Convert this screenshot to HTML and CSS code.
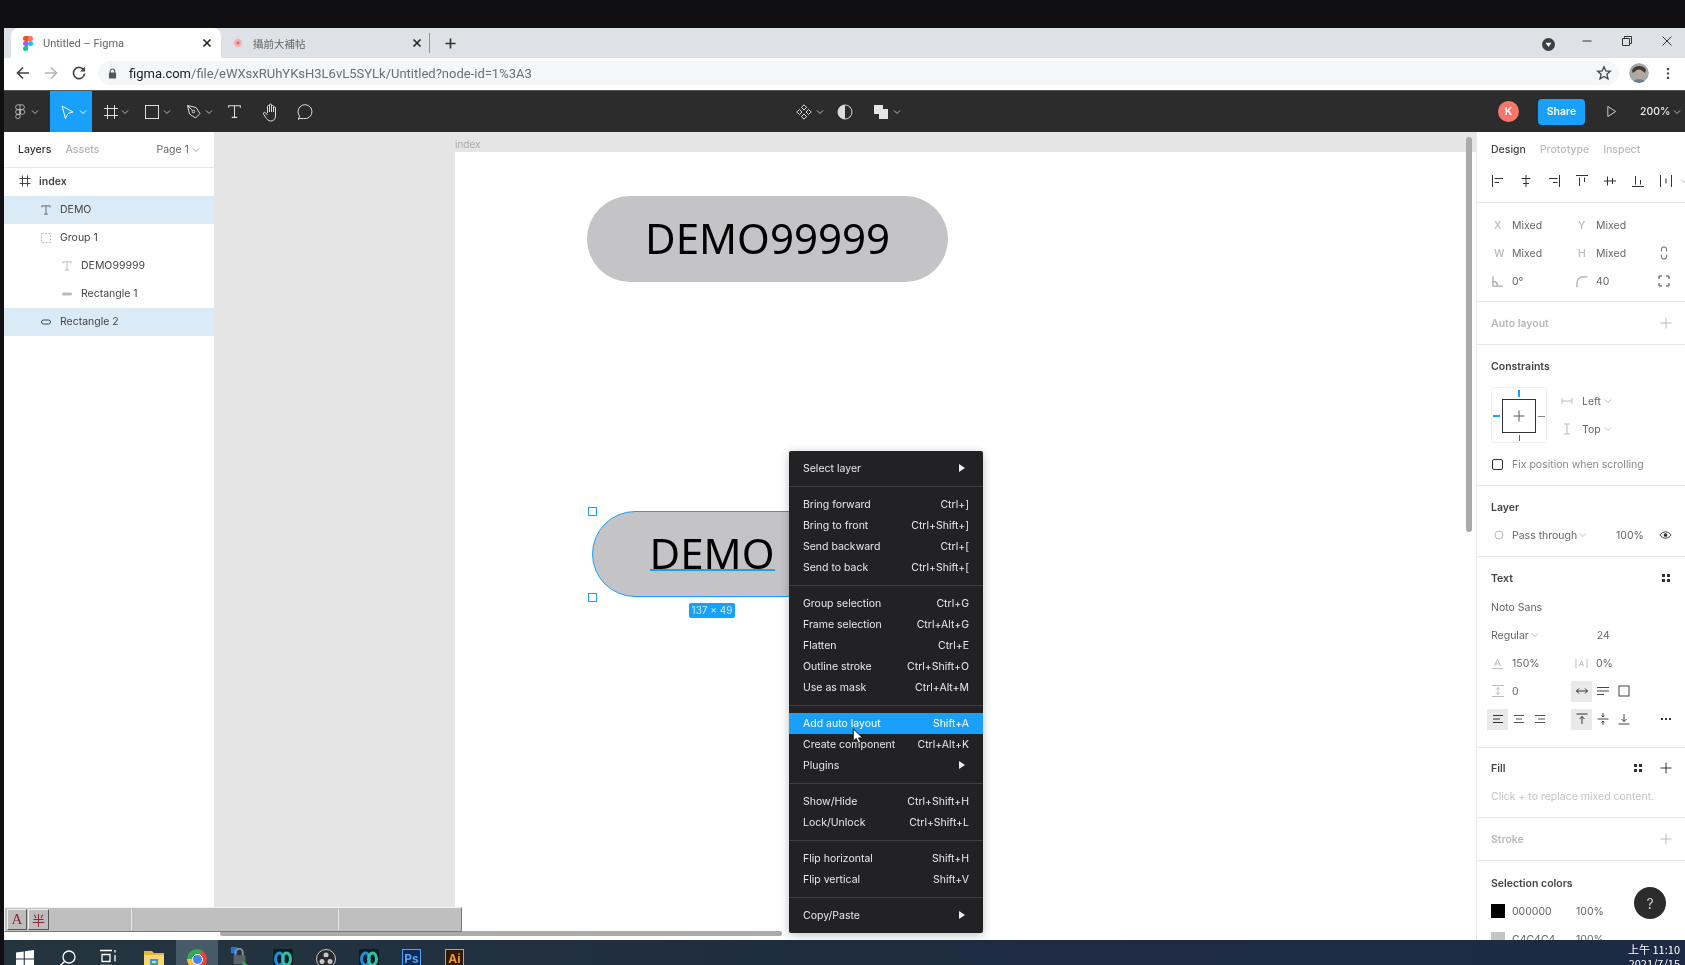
FILE: index.html
```html
<!DOCTYPE html>
<html lang="zh-Hant">
<head>
<meta charset="utf-8">
<title>Untitled – Figma</title>
<link rel="stylesheet" href="styles.css">
</head>
<body>
<svg class="sprite" aria-hidden="true">
  <symbol id="chev" viewBox="0 0 8 8"><path d="M1 2.5 4 5.5 7 2.5" fill="none" stroke="currentColor"/></symbol>
  <symbol id="tee" viewBox="0 0 16 16"><path d="M2.5 4.5V2.5H13.500V4.500M8 2.500V13.500M5.500 13.500H10.500" fill="none" stroke="currentColor"/></symbol>
  <symbol id="plus" viewBox="0 0 12 12"><path d="M6 .5V11.500M.5 6H11.500" fill="none" stroke="currentColor"/></symbol>
  <symbol id="dots" viewBox="0 0 12 12"><path d="M2 2h3v3H2zM7 2h3v3H7zM2 7h3v3H2zM7 7h3v3H7z" fill="currentColor"/></symbol>
  <symbol id="loops" viewBox="0 0 20 20"><rect width="20" height="20" rx="2" fill="#0c1c22"/><ellipse cx="6.500" cy="10" rx="4" ry="6" fill="none" stroke="#1b8fe0" stroke-width="3"/><ellipse cx="13.500" cy="10" rx="4" ry="6" fill="none" stroke="#2fc4a0" stroke-width="3"/></symbol>
</svg>

<div class="topbar"></div>

<div class="tabstrip">
  <div class="tab tab-active">
    <svg class="favicon" viewBox="0 0 12 18"><path d="M3 0H6V6H3a3 3 0 0 1 0-6Z" fill="#f24e1e"/><path d="M6 0H9a3 3 0 0 1 0 6H6Z" fill="#ff7262"/><path d="M3 6H6V12H3a3 3 0 0 1 0-6Z" fill="#a259ff"/><circle cx="9" cy="9" r="3" fill="#1abcfe"/><path d="M3 12H6V15a3 3 0 1 1-3-3Z" fill="#0acf83"/></svg>
    <span class="tab-title">Untitled – Figma</span>
    <svg class="tab-close" viewBox="0 0 10 10"><path d="M1.500 1.500 8.500 8.500M8.500 1.500 1.500 8.500" stroke="#222" stroke-width="1.600"/></svg>
  </div>
  <div class="tab">
    <svg class="favicon-round" viewBox="0 0 12 12"><circle cx="6" cy="6" r="5" fill="#f3b4b8"/><circle cx="6" cy="6" r="2" fill="#e2707a"/></svg>
    <span class="tab-title tab-title-cjk">攝前大補帖</span>
    <svg class="tab-close" viewBox="0 0 10 10"><path d="M1.500 1.500 8.500 8.500M8.500 1.500 1.500 8.500" stroke="#222" stroke-width="1.600"/></svg>
  </div>
  <span class="tab-sep"></span>
  <svg class="tab-new" viewBox="0 0 12 12"><path d="M6 .5V11.500M.5 6H11.500" stroke="#333" stroke-width="1.800"/></svg>
  <div class="win-controls">
    <svg class="win-drop" viewBox="0 0 14 14"><circle cx="7" cy="7" r="7" fill="#3c4043"/><path d="M3.800 5.200H10.200L7 9.600Z" fill="#fff"/></svg>
    <svg class="win-btn" viewBox="0 0 12 12"><path d="M1.500 6H10.500" stroke="#333"/></svg>
    <svg class="win-btn" viewBox="0 0 12 12"><path d="M1.500 3.500H8.500V10.500H1.500ZM3.500 3.500V1.500H10.500V8.500H8.500" fill="none" stroke="#333"/></svg>
    <svg class="win-btn" viewBox="0 0 12 12"><path d="M1.500 1.500 10.500 10.500M10.500 1.500 1.500 10.500" stroke="#333"/></svg>
  </div>
</div>

<div class="addressbar">
  <svg class="nav-icon" viewBox="0 0 16 16"><path d="M14 8H3M8 2.500 2.500 8 8 13.500" fill="none" stroke="#444" stroke-width="1.700"/></svg>
  <svg class="nav-icon" viewBox="0 0 16 16"><path d="M2 8H13M8 2.500 13.500 8 8 13.500" fill="none" stroke="#b4b7bb" stroke-width="1.700"/></svg>
  <svg class="nav-icon" viewBox="0 0 16 16"><path d="M13 5.500A5.600 5.600 0 1 0 13.600 8.500" fill="none" stroke="#444" stroke-width="1.700"/><path d="M14 1.500V6.500H9Z" fill="#444"/></svg>
  <div class="omnibox">
    <svg class="lock" viewBox="0 0 10 12"><path d="M2.500 5.500V3.500a2.500 2.500 0 0 1 5 0v2" fill="none" stroke="#555" stroke-width="1.200"/><rect x="1" y="5" width="8" height="6.500" rx="1" fill="#555"/></svg>
    <span class="url"><b>figma.com</b>/file/eWXsxRUhYKsH3L6vL5SYLk/Untitled?node-id=1%3A3</span>
    <svg class="star" viewBox="0 0 16 16"><path d="M8 1.800 9.800 6 14.300 6.300 10.900 9.300 12 13.800 8 11.400 4 13.800 5.100 9.300 1.700 6.300 6.200 6Z" fill="none" stroke="#444" stroke-width="1.300"/></svg>
  </div>
  <svg class="avatar" viewBox="0 0 20 20"><circle cx="10" cy="10" r="10" fill="#a9aaa6"/><path d="M3 8C4 2 15 1 17 7L16 10C13 7 7 7 4 10Z" fill="#3d3d3b"/><circle cx="10" cy="11" r="4.500" fill="#b9a79b"/><path d="M3 20C4 15 16 15 17 20Z" fill="#6d7f92"/></svg>
  <svg class="kebab" viewBox="0 0 4 14"><path d="M.8 1h2.400v2.400H.8zM.8 5.800h2.400v2.400H.8zM.8 10.600h2.400V13H.8z" fill="#444"/></svg>
</div>

<div class="toolbar">
  <div class="tool tool-menu">
    <svg class="tool-icon" viewBox="0 0 16 20"><path d="M5.500 1H10.500a3 3 0 0 1 0 6H5.500a3 3 0 0 1 0-6ZM5.500 7H8V13H5.500a3 3 0 0 1 0-6ZM11 7a3 3 0 1 1-.01 0ZM5.500 13H8V16a2.700 2.700 0 1 1-2.500-3ZM8 1V13" fill="none" stroke="#ccc"/></svg>
    <svg class="chev"><use href="#chev"/></svg>
  </div>
  <div class="tool tool-move">
    <svg class="tool-icon" viewBox="0 0 16 16"><path d="M3 2 14 8 9 9.500 6.500 14.500Z" fill="none" stroke="#fff"/></svg>
    <svg class="chev"><use href="#chev"/></svg>
  </div>
  <div class="tool">
    <svg class="tool-icon" viewBox="0 0 16 16"><path d="M4.500 1V15M11.500 1V15M1 4.500H15M1 11.500H15" fill="none" stroke="#ddd"/></svg>
    <svg class="chev"><use href="#chev"/></svg>
  </div>
  <div class="tool tool-tight">
    <svg class="tool-icon" viewBox="0 0 16 16"><rect x="1.500" y="1.500" width="13" height="13" fill="none" stroke="#ddd"/></svg>
    <svg class="chev"><use href="#chev"/></svg>
  </div>
  <div class="tool tool-tight">
    <svg class="tool-icon" viewBox="0 0 16 16"><path d="M1.500 1.500 10 3.500 14 9.500 9.500 14 3.500 10ZM1.500 1.500 6.500 6.500" fill="none" stroke="#ddd"/><circle cx="7.500" cy="7.500" r="1.300" fill="none" stroke="#ddd"/></svg>
    <svg class="chev"><use href="#chev"/></svg>
  </div>
  <div class="tool tool-plain">
    <svg class="tool-icon tool-t"><use href="#tee"/></svg>
  </div>
  <div class="tool tool-plain">
    <svg class="tool-icon tool-big tool-hand" viewBox="0 0 18 20"><path d="M5.500 11V4.500a1 1 0 0 1 2 0V3a1 1 0 0 1 2 0v1.500a1 1 0 0 1 2 0V6a1 1 0 0 1 2 0v8c0 3-2 5-4.500 5H8.500C6 19 5 17 3.500 15L1.500 12c-.7-1.300 1-2.300 2-1.300L5.500 13M7.500 4.500V10M9.500 3.500V10M11.500 5V10" fill="none" stroke="#ddd"/></svg>
  </div>
  <div class="tool tool-plain">
    <svg class="tool-icon tool-big" viewBox="0 0 18 18"><path d="M3.500 16.500 4.500 13A7 7 0 1 1 8.500 15.500H3.500Z" fill="none" stroke="#ddd"/></svg>
  </div>

  <div class="tb-center">
    <svg class="tc-icon" viewBox="0 0 16 16"><g fill="none" stroke="#ddd"><path d="M8 .8 10.600 3.400 8 6 5.400 3.400ZM8 10 10.600 12.600 8 15.200 5.400 12.600ZM3.400 5.400 6 8 3.400 10.600.8 8ZM12.600 5.400 15.200 8 12.600 10.600 10 8Z"/></g></svg>
    <svg class="chev"><use href="#chev"/></svg>
    <svg class="tc-icon tc-mask" viewBox="0 0 16 16"><circle cx="8" cy="8" r="7" fill="none" stroke="#ddd"/><path d="M8 1a7 7 0 0 0 0 14Z" fill="#ddd"/></svg>
    <svg class="tc-icon tc-bool" viewBox="0 0 16 16"><path d="M1 1H10V5H15V15H6V10H1Z" fill="#e4e4e4"/></svg>
    <svg class="chev"><use href="#chev"/></svg>
  </div>

  <div class="tb-right">
    <span class="user">K</span>
    <span class="share">Share</span>
    <svg class="play" viewBox="0 0 12 14"><path d="M2 1.500 10.500 7 2 12.500Z" fill="none" stroke="#ddd"/></svg>
    <span class="zoomval">200%</span>
    <svg class="chev"><use href="#chev"/></svg>
  </div>
</div>

<div class="main">
  <aside class="left">
    <div class="left-tabs">
      <span class="lt-on">Layers</span>
      <span class="lt-off">Assets</span>
      <span class="lt-page">Page 1</span>
      <svg class="chev"><use href="#chev"/></svg>
    </div>
    <div class="layer d0 lay-index"><svg class="l-icon" viewBox="0 0 12 12"><path d="M3.500 .5V11.500M8.500 .5V11.500M.5 3.500H11.500M.5 8.500H11.500" fill="none" stroke="#444"/></svg><span>index</span></div>
    <div class="layer d1 sel"><svg class="l-icon"><use href="#tee"/></svg><span>DEMO</span></div>
    <div class="layer d1"><svg class="l-icon" viewBox="0 0 12 12"><rect x="1.500" y="1.500" width="9" height="9" fill="none" stroke="#bbb" stroke-dasharray="2 1.500"/></svg><span>Group 1</span></div>
    <div class="layer d2 faint"><svg class="l-icon"><use href="#tee"/></svg><span>DEMO99999</span></div>
    <div class="layer d2"><svg class="l-icon" viewBox="0 0 12 12"><rect x="1" y="4.500" width="10" height="3" rx="1.500" fill="#bbb"/></svg><span>Rectangle 1</span></div>
    <div class="layer d1 sel"><svg class="l-icon" viewBox="0 0 12 12"><rect x="1.500" y="4" width="9" height="4" rx="2" fill="none" stroke="#444"/></svg><span>Rectangle 2</span></div>
  </aside>

  <section class="canvas">
    <span class="frame-label">index</span>
    <div class="frame"></div>
    <div class="pill pill-one">DEMO99999</div>
    <div class="pill pill-two">DEMO</div>
    <span class="text-underline"></span>
    <span class="handle handle-top"></span>
    <span class="handle handle-bottom"></span>
    <span class="size-label">137 × 49</span>
    <span class="vscroll"></span>
    <span class="bottom-strip"></span>
    <span class="hscroll"></span>

    <div class="menu">
      <div class="m-row"><span>Select layer</span><i class="arrow"></i></div>
      <div class="m-sep"></div>
      <div class="m-row"><span>Bring forward</span><span>Ctrl+]</span></div>
      <div class="m-row"><span>Bring to front</span><span>Ctrl+Shift+]</span></div>
      <div class="m-row"><span>Send backward</span><span>Ctrl+[</span></div>
      <div class="m-row"><span>Send to back</span><span>Ctrl+Shift+[</span></div>
      <div class="m-sep"></div>
      <div class="m-row"><span>Group selection</span><span>Ctrl+G</span></div>
      <div class="m-row"><span>Frame selection</span><span>Ctrl+Alt+G</span></div>
      <div class="m-row"><span>Flatten</span><span>Ctrl+E</span></div>
      <div class="m-row"><span>Outline stroke</span><span>Ctrl+Shift+O</span></div>
      <div class="m-row"><span>Use as mask</span><span>Ctrl+Alt+M</span></div>
      <div class="m-sep"></div>
      <div class="m-row m-hot"><span>Add auto layout</span><span>Shift+A</span></div>
      <div class="m-row"><span>Create component</span><span>Ctrl+Alt+K</span></div>
      <div class="m-row"><span>Plugins</span><i class="arrow"></i></div>
      <div class="m-sep"></div>
      <div class="m-row"><span>Show/Hide</span><span>Ctrl+Shift+H</span></div>
      <div class="m-row"><span>Lock/Unlock</span><span>Ctrl+Shift+L</span></div>
      <div class="m-sep"></div>
      <div class="m-row"><span>Flip horizontal</span><span>Shift+H</span></div>
      <div class="m-row"><span>Flip vertical</span><span>Shift+V</span></div>
      <div class="m-sep"></div>
      <div class="m-row"><span>Copy/Paste</span><i class="arrow"></i></div>
    </div>
    <svg class="cursor" viewBox="0 0 12 17"><path d="M1 1V14L4 11 6.500 16 9 15 6.500 10.500H11Z" fill="#fff" stroke="#111"/></svg>
  </section>

  <aside class="right">
    <div class="sec sec-head">
      <div class="r-tabs"><span class="rt-on">Design</span><span class="rt-off">Prototype</span><span class="rt-off">Inspect</span></div>
      <div class="align-row">
        <svg viewBox="0 0 14 14"><path d="M1.500 1V13M3.500 4.500H12M3.500 8.500H8" fill="none" stroke="#333"/></svg>
        <svg viewBox="0 0 14 14"><path d="M7 1V13M2.500 4.500H11.500M4 9.500H10" fill="none" stroke="#333"/></svg>
        <svg viewBox="0 0 14 14"><path d="M12.500 1V13M2 4.500H10.500M6 8.500H10.500" fill="none" stroke="#333"/></svg>
        <svg viewBox="0 0 14 14"><path d="M1 1.500H13M4.500 3.500V12M9.500 3.500V8" fill="none" stroke="#333"/></svg>
        <svg viewBox="0 0 14 14"><path d="M1 7H13M4.500 2.500V11.500M9.500 4V10" fill="none" stroke="#333"/></svg>
        <svg viewBox="0 0 14 14"><path d="M1 12.500H13M4.500 2V10.500M9.500 6V10.500" fill="none" stroke="#333"/></svg>
        <svg class="align-last" viewBox="0 0 14 14"><path d="M1.500 1V13M12.500 1V13M7 4.500V9.500" fill="none" stroke="#333"/></svg>
        <svg class="chev"><use href="#chev"/></svg>
      </div>
    </div>

    <div class="sec sec-xy">
      <div class="pgrid"><span class="plab">X</span><span class="pval">Mixed</span><span class="plab">Y</span><span class="pval">Mixed</span></div>
      <div class="pgrid"><span class="plab">W</span><span class="pval">Mixed</span><span class="plab">H</span><span class="pval">Mixed</span>
        <svg class="pend" viewBox="0 0 10 16"><path d="M2 6V4a3 3 0 0 1 6 0v2M2 10v2a3 3 0 0 0 6 0v-2" fill="none" stroke="#444"/></svg></div>
      <div class="pgrid">
        <svg class="plab-icon" viewBox="0 0 10 10"><path d="M1.500 1V8.500H9M1.500 5C4 5 5 6.500 5 8.500" fill="none" stroke="#aaa"/></svg><span class="pval">0°</span>
        <svg class="plab-icon" viewBox="0 0 10 10"><path d="M1.500 9.500V6A4.500 4.500 0 0 1 6 1.500H9.500" fill="none" stroke="#aaa"/></svg><span class="pval">40</span>
        <svg class="pend" viewBox="0 0 12 12"><path d="M1 4V1H4M8 1H11V4M11 8V11H8M4 11H1V8" fill="none" stroke="#444"/></svg></div>
    </div>

    <div class="sec sec-auto">
      <span class="sec-title dim">Auto layout</span>
      <svg class="sec-plus dimicon"><use href="#plus"/></svg>
    </div>

    <div class="sec sec-con">
      <div class="title-row"><span class="sec-title">Constraints</span></div>
      <div class="con-body">
        <div class="con-box">
          <span class="con-inner"></span>
          <svg class="con-cross"><use href="#plus"/></svg>
          <i class="con-t"></i><i class="con-b"></i><i class="con-l"></i><i class="con-r"></i>
        </div>
        <div class="con-opts">
          <div class="con-opt"><svg viewBox="0 0 12 12"><path d="M1 3V9M11 3V9M1 6H11" fill="none" stroke="#bbb"/></svg><span>Left</span><svg class="chev"><use href="#chev"/></svg></div>
          <div class="con-opt"><svg viewBox="0 0 12 12"><path d="M3 1H9M3 11H9M6 1V11" fill="none" stroke="#bbb"/></svg><span>Top</span><svg class="chev"><use href="#chev"/></svg></div>
        </div>
      </div>
      <div class="fix-row"><span class="check"></span><span>Fix position when scrolling</span></div>
    </div>

    <div class="sec sec-layer">
      <div class="title-row"><span class="sec-title">Layer</span></div>
      <div class="layer-row">
        <svg class="blend" viewBox="0 0 10 10"><circle cx="5" cy="5" r="4" fill="none" stroke="#bbb"/></svg>
        <span class="txt-mid">Pass through</span>
        <svg class="chev"><use href="#chev"/></svg>
        <span class="opacity">100%</span>
        <svg class="eye" viewBox="0 0 14 10"><path d="M1 5C4 .5 10 .5 13 5C10 9.500 4 9.500 1 5Z" fill="none" stroke="#333"/><circle cx="7" cy="5" r="2" fill="#333"/></svg>
      </div>
    </div>

    <div class="sec sec-text">
      <div class="title-row"><span class="sec-title">Text</span><svg class="sec-dots"><use href="#dots"/></svg></div>
      <div class="plain-row">Noto Sans</div>
      <div class="weight-row"><span>Regular</span><svg class="chev"><use href="#chev"/></svg><span class="wsize">24</span></div>
      <div class="pgrid">
        <svg class="plab-icon" viewBox="0 0 14 14"><path d="M3.500 10 7 2.500 10.500 10M4.800 7.500H9.200M1 12.500H13" fill="none" stroke="#bbb"/></svg><span class="pval">150%</span>
        <svg class="plab-icon" viewBox="0 0 14 14"><path d="M1 2V12M13 2V12M4.500 10 7 4 9.500 10M5.500 8H8.500" fill="none" stroke="#bbb"/></svg><span class="pval">0%</span>
      </div>
      <div class="igrid">
        <svg class="ic" viewBox="0 0 14 14"><path d="M1 1.500H13M1 12.500H13M7 3.500V10.500M5 8.500 7 10.500 9 8.500M5 5.500 7 3.500 9 5.500" fill="none" stroke="#bbb"/></svg>
        <span class="ival">0</span>
        <span class="ib on"><svg class="ic" viewBox="0 0 14 14"><path d="M1.500 7H12.500M4 4.500 1.500 7 4 9.500M10 4.500 12.500 7 10 9.500" fill="none" stroke="#333"/></svg></span>
        <span class="ib"><svg class="ic" viewBox="0 0 14 14"><path d="M1 3.500H13M1 7H13M1 10.500H8" fill="none" stroke="#444"/></svg></span>
        <span class="ib"><svg class="ic" viewBox="0 0 14 14"><rect x="2" y="2" width="10" height="10" fill="none" stroke="#444"/></svg></span>
      </div>
      <div class="igrid">
        <span class="ib on"><svg class="ic" viewBox="0 0 14 14"><path d="M2 3.500H12M2 7H9M2 10.500H12" fill="none" stroke="#333"/></svg></span>
        <span class="ib"><svg class="ic" viewBox="0 0 14 14"><path d="M2 3.500H12M4 7H10M2 10.500H12" fill="none" stroke="#555"/></svg></span>
        <span class="ib"><svg class="ic" viewBox="0 0 14 14"><path d="M2 3.500H12M5 7H12M2 10.500H12" fill="none" stroke="#555"/></svg></span>
        <span class="ib"></span>
        <span class="ib on"><svg class="ic" viewBox="0 0 14 14"><path d="M1.500 2H12.500M7 12V4.500M4.500 7 7 4.500 9.500 7" fill="none" stroke="#333"/></svg></span>
        <span class="ib"><svg class="ic" viewBox="0 0 14 14"><path d="M1.500 7H12.500M7 1V5L5.500 3.500M7 5 8.500 3.500M7 13V9L5.500 10.500M7 9 8.500 10.500" fill="none" stroke="#444"/></svg></span>
        <span class="ib"><svg class="ic" viewBox="0 0 14 14"><path d="M1.500 12H12.500M7 2V9.500M4.500 7 7 9.500 9.500 7" fill="none" stroke="#444"/></svg></span>
        <span class="ib"></span>
        <span class="ib"><svg class="ic" viewBox="0 0 14 14"><path d="M2 6h2v2H2zM6 6h2v2H6zM10 6h2v2h-2z" fill="#333"/></svg></span>
      </div>
    </div>

    <div class="sec sec-fill">
      <div class="title-row"><span class="sec-title">Fill</span><svg class="sec-dots sec-dots-mid"><use href="#dots"/></svg><svg class="sec-plus"><use href="#plus"/></svg></div>
      <div class="plain-row dim">Click + to replace mixed content.</div>
    </div>

    <div class="sec sec-stroke">
      <span class="sec-title dim">Stroke</span>
      <svg class="sec-plus dimicon"><use href="#plus"/></svg>
    </div>

    <div class="sec sec-sel">
      <div class="title-row"><span class="sec-title">Selection colors</span></div>
      <div class="swatch-row"><span class="swatch sw-black"></span><span class="sw-hex">000000</span><span>100%</span></div>
      <div class="swatch-row"><span class="swatch sw-grey"></span><span class="sw-hex">C4C4C4</span><span>100%</span></div>
    </div>
    <span class="help">?</span>
  </aside>

  <div class="ime">
    <span class="ime-btn ime-a">A</span>
    <span class="ime-btn ime-h">半</span>
    <span class="ime-cell ime-c1"></span>
    <span class="ime-cell ime-c2"></span>
    <span class="ime-cell ime-c3"></span>
  </div>
</div>

<footer class="taskbar">
  <span class="ti"><svg class="ti-svg" viewBox="0 0 20 20"><path d="M1 3.500 8.700 2.400V9.400H1ZM9.800 2.200 19 1V9.400H9.800ZM1 10.600H8.700V17.600L1 16.500ZM9.800 10.600H19V19L9.800 17.800Z" fill="#fff"/></svg></span>
  <span class="ti ti-search"><svg class="ti-svg" viewBox="0 0 20 20"><circle cx="12" cy="8" r="6" fill="none" stroke="#fff" stroke-width="1.300"/><path d="M7.500 12.500 1.500 18.500" stroke="#fff" stroke-width="1.500"/></svg></span>
  <span class="ti ti-view"><svg class="ti-svg" viewBox="0 0 20 20"><path d="M1 1.500H13M1 16.500H13M3 5.500H11V12.500H3ZM16 1V3.500M16 6V12.500" fill="none" stroke="#fff" stroke-width="1.300"/></svg></span>
  <span class="ti"><svg class="ti-svg" viewBox="0 0 20 20"><path d="M0 2H8L10 4H20V20H0Z" fill="#e8b53f"/><path d="M0 6H20V20H0Z" fill="#f7d774"/><rect x="6" y="10" width="8" height="8" fill="#2d9bd8"/><rect x="8" y="12" width="4" height="2" fill="#f7d774"/></svg></span>
  <span class="ti ti-on"><span class="chrome"><span class="chrome-dot"></span></span></span>
  <span class="ti ti-lock"><svg class="ti-svg ti-up" viewBox="0 0 20 22"><rect x="0" y="0" width="7" height="7" fill="#2a72d8"/><path d="M5 10V6a4 4 0 0 1 8 0v4" fill="none" stroke="#8d9599" stroke-width="2"/><rect x="3" y="9" width="13" height="10" fill="#5a6368"/><path d="M13 15 20 21H13Z" fill="#2eb34a"/></svg></span>
  <span class="ti"><svg class="ti-svg"><use href="#loops"/></svg></span>
  <span class="ti"><svg class="ti-svg" viewBox="0 0 20 20"><circle cx="10" cy="10" r="9.500" fill="#2a2a2e" stroke="#c9c9c9"/><circle cx="10" cy="6" r="2.500" fill="#c9c9c9"/><circle cx="6" cy="12.500" r="2.500" fill="#c9c9c9"/><circle cx="14" cy="12.500" r="2.500" fill="#c9c9c9"/><circle cx="10" cy="10" r="2" fill="#2a2a2e"/></svg></span>
  <span class="ti"><svg class="ti-svg"><use href="#loops"/></svg></span>
  <span class="ti"><span class="appbox ps">Ps</span></span>
  <span class="ti"><span class="appbox ai">Ai</span></span>
  <div class="clock"><span>上午 11:10</span><span>2021/7/15</span></div>
</footer>
</body>
</html>
```
FILE: styles.css
```css
* { box-sizing: border-box; }
html, body { margin: 0; height: 100%; }
body {
  width: 1685px;
  height: 965px;
  overflow: hidden;
  background: #101012;
  font-family: Inter, "Noto Sans", sans-serif;
  font-size: 10.500px;
  color: #333;
  display: flex;
  flex-direction: column;
  filter: blur(.35px);
}
svg { display: block; flex: none; }
.sprite { position: absolute; width: 0; height: 0; }
.chev { width: 8px; height: 8px; color: #bbb; }

.topbar { height: 28px; flex: none; }

/* browser tabs */
.tabstrip {
  height: 30px; flex: none; margin-left: 4px;
  background: #dee1e6;
  display: flex; align-items: stretch; padding-left: 7px;
}
.tab {
  width: 210px; display: flex; align-items: center;
  padding: 0 10px 0 12px;
  font-family: Roboto, "Noto Sans CJK TC", sans-serif;
  font-size: 11px; color: #666;
}
.tab-active { background: #fff; border-radius: 8px 8px 0 0; }
.favicon { width: 10px; height: 15px; margin-right: 10px; }
.favicon-round { width: 10px; height: 10px; margin-right: 10px; }
.tab-title { flex: 1; }
.tab-title-cjk { font-family: "Noto Sans CJK TC", sans-serif; font-size: 10.500px; }
.tab-close { width: 10px; height: 10px; margin-right: -1px; }
.tab-sep { width: 1px; height: 20px; background: #8f9297; align-self: center; margin-left: -2px; }
.tab-new { width: 11px; height: 11px; align-self: center; margin-left: 15px; }
.win-controls { margin-left: auto; display: flex; align-items: center; }
.win-drop { width: 13px; height: 13px; margin-right: 26px; margin-top: 2px; }
.win-btn { width: 12px; height: 12px; margin-right: 28px; margin-top: -4px; }
.win-btn:last-child { margin-right: 12px; }

/* address bar */
.addressbar {
  height: 32px; flex: none; margin-left: 4px; background: #fff;
  display: flex; align-items: center; padding: 0 0 2px 11px;
}
.nav-icon { width: 16px; height: 16px; margin-right: 12px; }
.omnibox {
  width: 1521px; height: 24px; margin-left: -1px; background: #f5f6f7; border-radius: 12px;
  display: flex; align-items: center; padding: 0 7px 0 10px;
}
.lock { width: 9px; height: 11px; margin-right: 12px; }
.url { font-family: Roboto, sans-serif; font-size: 13px; color: #6b6f74; flex: 1; white-space: nowrap; }
.url b { font-weight: 400; color: #202124; }
.star { width: 16px; height: 16px; }
.avatar { width: 20px; height: 20px; margin-left: 10px; border-radius: 50%; }
.kebab { width: 4px; height: 13px; margin-left: 17px; }

/* figma toolbar */
.toolbar {
  height: 42px; flex: none; margin-left: 4px; background: #2c2c2c;
  border-top: 1px solid #555;
  display: flex; align-items: center;
}
.tool { width: 42px; height: 100%; display: flex; align-items: center; padding-left: 11px; }
.tool .chev { margin-left: 2px; }
.tool-menu { width: 46px; padding-left: 8px; }
.tool-menu .chev { margin-left: 3px; }
.tool-move { background: #18a0fb; padding-left: 9px; }
.tool-move .chev { color: #fff; margin-left: 4px; }
.tool-tight { padding-left: 10px; }
.tool-tight .chev { margin-left: 3px; }
.tool-plain { width: 35px; padding-left: 8px; }
.tool-icon { width: 16px; height: 16px; }
.tool-t { color: #ddd; width: 17px; height: 17px; }
.tool-big { width: 18px; height: 20px; margin-left: -1px; }
.tool-hand { margin-left: 1px; }
.tb-center { margin-left: 473px; display: flex; align-items: center; }
.tc-icon { width: 16px; height: 16px; }
.tb-center .chev { margin-left: 4px; }
.tc-mask { margin-left: 13px; }
.tc-bool { margin-left: 20px; }
.tb-right { margin-left: auto; display: flex; align-items: center; padding-right: 4px; }
.user {
  width: 21px; height: 21px; border-radius: 50%; background: #f9776a; color: #fff;
  font-weight: 600; display: flex; align-items: center; justify-content: center;
}
.share {
  width: 47px; height: 26px; margin-left: 19px; border-radius: 4px; background: #18a0fb;
  color: #fff; font-weight: 600; display: flex; align-items: center; justify-content: center;
}
.play { width: 11px; height: 13px; margin-left: 21px; }
.zoomval { margin-left: 23px; color: #eee; font-weight: 500; width: 32px; }
.tb-right .chev { margin-left: 1px; }

/* main area */
.main { flex: 1; min-height: 0; margin-left: 4px; position: relative; display: flex; overflow: hidden; }
.left { width: 210px; flex: none; background: #fff; }
.left-tabs {
  height: 36px; border-bottom: 1px solid #e8e8e8; display: flex; align-items: center;
  padding: 0 0 0 14px; font-weight: 500;
}
.lt-on { color: #333; }
.lt-off { color: #b3b3b3; margin-left: 14px; }
.lt-page { color: #666; font-weight: 400; margin-left: 57px; }
.left-tabs .chev { margin-left: 3px; color: #999; }
.layer { height: 28px; display: flex; align-items: center; gap: 6px; color: #444; padding-bottom: 1px; }
.d0 { padding-left: 13px; }
.d1 { padding-left: 34px; }
.d2 { padding-left: 55px; }
.lay-index { font-weight: 600; padding-bottom: 2px; }
.sel { background: #daebf7; }
.l-icon { width: 16px; height: 12px; color: #444; }
.faint .l-icon { color: #aaa; }

/* canvas */
.canvas { flex: 1; position: relative; background: #e5e5e5; overflow: hidden; }
.frame { position: absolute; left: 241px; top: 20px; right: 0; bottom: 0; background: #fff; }
.frame-label { position: absolute; left: 241px; top: 6px; font-size: 10px; color: #aaa; }
.pill {
  position: absolute; background: #c4c3c6; color: #000;
  display: flex; align-items: center; justify-content: center;
  font-family: "Noto Sans", sans-serif; font-size: 42px; padding-bottom: 4px;
}
.pill-one { left: 373px; top: 64px; width: 361px; height: 86px; border-radius: 43px; }
.pill-two { left: 378px; top: 379px; width: 240px; height: 86px; border-radius: 43px; border: 1.500px solid #18a0fb; }
.text-underline { position: absolute; left: 436px; top: 437px; width: 125px; height: 1.500px; background: #18a0fb; }
.handle { position: absolute; left: 374px; width: 9px; height: 9px; background: #fff; border: 1px solid #18a0fb; }
.handle-top { top: 375px; }
.handle-bottom { top: 461px; }
.size-label {
  position: absolute; left: 475px; top: 471px; width: 46px; height: 15px; border-radius: 2px;
  background: #18a0fb; color: #cfeafd; font-size: 10px; text-align: center; line-height: 15px;
}
.vscroll { position: absolute; left: 1252px; top: 5px; width: 6px; height: 395px; border-radius: 3px; background: #aaa; }
.bottom-strip { position: absolute; left: 0; right: 0; top: 799px; bottom: 0; background: #fff; }
.hscroll { position: absolute; left: 6px; top: 799px; width: 562px; height: 5px; border-radius: 3px; background: #aaa; }

/* context menu */
.menu {
  position: absolute; left: 575px; top: 319px; width: 194px; padding: 7px 0;
  background: #222224; color: #e8e8e8; box-shadow: 0 2px 10px rgba(0,0,0,.25);
  border-radius: 2px;
}
.m-row { height: 21px; padding: 0 14px 1px; display: flex; align-items: center; justify-content: space-between; }
.m-sep { height: 15px; display: flex; align-items: center; }
.m-sep::before { content: ""; flex: 1; height: 1px; background: #3f3f41; }
.m-hot { background: #18a0fb; color: #fff; }
.arrow { width: 0; height: 0; border-left: 6px solid #eee; border-top: 4px solid transparent; border-bottom: 4px solid transparent; margin-right: 4px; }
.cursor { position: absolute; left: 638px; top: 596px; width: 12px; height: 16px; }

/* right panel */
.right { width: 209px; flex: none; position: relative; background: #fff; border-left: 1px solid #e8e8e8; overflow: hidden; }
.sec { border-bottom: 1px solid #e8e8e8; padding: 0 13px 0 14px; flex: none; }
.sec-title { font-weight: 600; color: #444; }
.dim { color: #b9b9b9; }
.dimicon { color: #bbb; }
.title-row { height: 28px; display: flex; align-items: center; justify-content: space-between; }
.plain-row { height: 28px; display: flex; align-items: center; color: #666; }
.plain-row.dim { color: #c4c4c4; }
.sec-plus { width: 12px; height: 12px; color: #333; }
.sec-plus.dimicon { color: #bbb; }
.sec-dots { width: 12px; height: 12px; color: #333; }
.sec-dots-mid { margin-left: auto; margin-right: 16px; }

.sec-head { height: 71px; }
.r-tabs { height: 35px; display: flex; align-items: center; gap: 14px; font-weight: 500; }
.rt-on { color: #444; }
.rt-off { color: #bbb; }
.align-row { height: 28px; display: flex; align-items: center; margin-left: -7px; }
.align-row svg:not(.chev) { width: 14px; height: 14px; margin: 0 7px; }
.align-row .align-last { margin-right: 1px; }

.pgrid {
  height: 28px; display: grid; grid-template-columns: 21px 63px 21px 1fr 14px;
  align-items: center; color: #666;
}
.plab { color: #bbb; padding-left: 3px; font-weight: 500; }
.plab-icon { width: 13px; height: 13px; }
.pval { color: #666; }
.pend { width: 12px; height: 14px; grid-column: 5; }

.sec-xy { height: 99px; padding-top: 8px; }
.sec-auto, .sec-stroke { height: 43px; display: flex; align-items: center; justify-content: space-between; }
.sec-con { height: 141px; padding-top: 7px; }
.con-body { display: flex; margin-top: 7px; height: 56px; }
.con-box { width: 56px; height: 56px; position: relative; border: 1px solid #f0f0f0; border-radius: 2px; }
.con-inner { position: absolute; left: 10px; top: 11px; width: 34px; height: 34px; border: 1px solid #333; }
.con-cross { position: absolute; left: 21px; top: 22px; width: 12px; height: 12px; color: #555; }
.con-t, .con-b, .con-l, .con-r { position: absolute; }
.con-t { left: 26px; top: 2px; width: 2px; height: 7px; background: #18a0fb; }
.con-b { left: 27px; top: 47px; width: 1px; height: 6px; background: #666; }
.con-l { left: 1px; top: 27px; width: 7px; height: 2px; background: #18a0fb; }
.con-r { left: 46px; top: 28px; width: 7px; height: 1px; background: #888; }
.con-opts { margin-left: 14px; }
.con-opt { height: 28px; display: flex; align-items: center; color: #666; }
.con-opt svg:first-child { width: 12px; height: 12px; margin-right: 9px; }
.con-opt .chev { margin-left: 3px; }
.fix-row { height: 28px; margin-top: 7px; display: flex; align-items: center; color: #888; }
.check { width: 11px; height: 11px; border: 1px solid #333; border-radius: 2px; margin: 0 9px 0 1px; }

.sec-layer { height: 71px; padding-top: 7px; }
.layer-row { height: 28px; display: flex; align-items: center; color: #666; white-space: nowrap; }
.blend { width: 10px; height: 10px; margin: 0 8px 0 3px; }
.layer-row .chev { margin-left: 2px; }
.opacity { margin-left: auto; width: 43px; }
.eye { width: 13px; height: 10px; }

.sec-text { height: 191px; padding-top: 7px; }
.weight-row { height: 28px; display: flex; align-items: center; color: #666; }
.weight-row .chev { margin-left: 2px; }
.wsize { margin-left: 58px; }
.sec-text .plain-row { margin-top: 1px; }
.igrid {
  height: 28px; margin-left: -4px; display: grid; grid-template-columns: repeat(9, 21px);
  align-items: center; color: #666;
}
.ic { width: 14px; height: 14px; }
.igrid > .ic { margin-left: 4px; }
.ival { grid-column: 2 / 5; padding-left: 4px; }
.ib { width: 21px; height: 21px; display: flex; align-items: center; justify-content: center; }
.on { background: #e9e9e9; }

.sec-fill { height: 70px; padding-top: 6px; }
.sec-sel { padding-top: 8px; border-bottom: 0; }
.swatch-row { height: 28px; display: flex; align-items: center; color: #666; }
.swatch { width: 14px; height: 14px; margin-right: 7px; }
.sw-black { background: #000; }
.sw-grey { background: #c4c4c4; }
.sw-hex { width: 64px; }
.help {
  position: absolute; left: 157px; top: 755px; width: 32px; height: 32px; border-radius: 50%;
  background: #2c2c2c; color: #ccc; font-size: 14px; display: flex; align-items: center; justify-content: center;
}

/* input method bar */
.ime {
  position: absolute; left: 0; top: 775px; width: 458px; height: 25px;
  background: #c0c0c0; border: 1px solid; border-color: #f2f2f2 #777 #777 #f2f2f2;
  display: flex; align-items: center; padding-left: 2px; gap: 1px;
}
.ime-btn {
  width: 20px; height: 21px; background: #bdbdbd; border: 1px solid; border-color: #eee #555 #555 #eee;
  color: #8a2630; display: flex; align-items: center; justify-content: center; font-size: 13px;
}
.ime-a { font-family: "Liberation Serif", serif; font-size: 15px; font-weight: 400; }
.ime-h { font-family: "Noto Sans CJK TC", sans-serif; width: 21px; }
.ime-cell { height: 21px; background: #bfbfbf; border-right: 1px solid #e8e8e8; }
.ime-c1 { width: 82px; }
.ime-c2 { width: 206px; }
.ime-c3 { flex: 1; border-right: 0; }

/* windows taskbar */
.taskbar {
  height: 25px; flex: none; margin-left: 4px; overflow: hidden; position: relative;
  background: linear-gradient(90deg, #24353f 0%, #1f2c40 50%, #1c2a45 100%);
  display: flex; align-items: flex-start;
}
.ti { width: 42.900px; height: 38px; flex: none; display: flex; justify-content: center; padding-top: 9px; }
.ti-on { background: #465a68; }
.ti-search { padding-right: 2px; }
.ti-view { padding-right: 5px; }
.ti-up { height: 22px; margin-top: -2px; }
.ti-lock { padding-left: 0; }
.ti-svg { width: 20px; height: 20px; }
.chrome {
  width: 20px; height: 20px; border-radius: 50%; display: flex; align-items: center; justify-content: center;
  background: conic-gradient(from 30deg, #e8453c 0 120deg, #fbc02d 120deg 240deg, #34a853 240deg 360deg);
}
.chrome-dot { width: 9px; height: 9px; border-radius: 50%; background: #4285f4; border: 1.500px solid #fff; box-sizing: content-box; }
.appbox {
  width: 19px; height: 19px; display: flex; align-items: center; justify-content: center;
  font-size: 12px; font-weight: 700; border: 1px solid;
}
.ps { background: #0f2a55; color: #4ea7f5; border-color: #4ea7f5; }
.ai { background: #301a02; color: #f29a1f; border-color: #f29a1f; }
.clock {
  position: absolute; right: 5px; top: 2px; display: flex; flex-direction: column; align-items: flex-end;
  font-family: "Noto Sans CJK TC", sans-serif; font-size: 11px; line-height: 14px; color: #fff;
}
```
